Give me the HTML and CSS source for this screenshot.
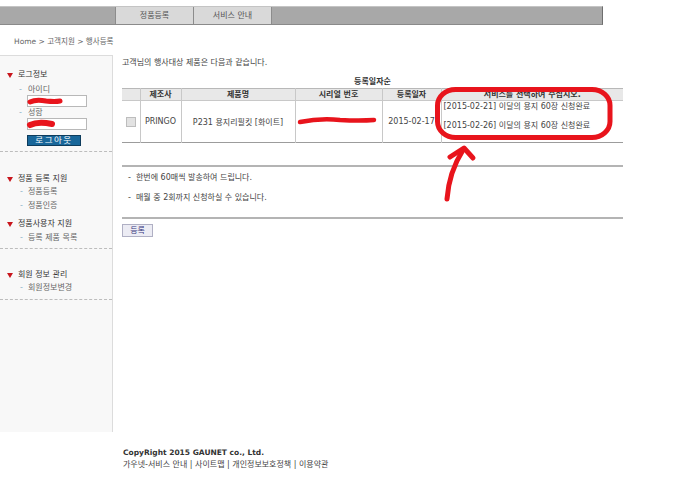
FILE: index.html
```html
<!DOCTYPE html>
<html lang="ko">
<head>
<meta charset="utf-8">
<title>행사등록</title>
<link rel="stylesheet" href="styles.css">
</head>
<body>
<div class="page">
  <div class="topnav">
    <div class="nav-left"></div>
    <a class="tab">정품등록</a>
    <a class="tab">서비스 안내</a>
    <div class="nav-rest"></div>
  </div>
  <div class="crumb">Home &gt; 고객지원 &gt; 행사등록</div>
  <div class="body-row">
    <aside class="side">
      <section class="sec sec-first">
        <div class="sec-title">로그정보</div>
        <div class="item item-sm item-first">아이디</div>
        <div class="field"></div>
        <div class="item item-sm">성함</div>
        <div class="field"></div>
        <div class="logout">로그아웃</div>
      </section>
      <section class="sec sec-2">
        <div class="sec-title">정품 등록 지원</div>
        <div class="item">정품등록</div>
        <div class="item">정품인증</div>
        <div class="sec-title sec-title-2">정품사용자 지원</div>
        <div class="item item-gap">등록 제품 목록</div>
      </section>
      <section class="sec sec-3">
        <div class="sec-title">회원 정보 관리</div>
        <div class="item">회원정보변경</div>
      </section>
    </aside>
    <main class="main">
      <p class="intro">고객님의 행사대상 제품은 다음과 같습니다.</p>
      <div class="caption">등록일자순</div>
      <table class="list">
        <colgroup>
          <col class="c-chk"><col class="c-maker"><col class="c-name"><col class="c-serial"><col class="c-date"><col class="c-state">
        </colgroup>
        <thead>
          <tr><th></th><th>제조사</th><th>제품명</th><th>시리얼 번호</th><th>등록일자</th><th>서비스를 선택하여 주십시오.</th></tr>
        </thead>
        <tbody>
          <tr>
            <td><span class="box"></span></td>
            <td>PRINGO</td>
            <td>P231 용지리필킷 [화이트]</td>
            <td></td>
            <td>2015-02-17</td>
            <td class="state">
              <div>[2015-02-21] 이달의 용지 60장 신청완료</div>
              <div class="state-2">[2015-02-26] 이달의 용지 60장 신청완료</div>
            </td>
          </tr>
        </tbody>
      </table>
      <div class="notes">
        <p>-&nbsp;&nbsp;한번에 60매씩 발송하여 드립니다.</p>
        <p>-&nbsp;&nbsp;매월 중 2회까지 신청하실 수 있습니다.</p>
      </div>
      <button class="btn">등록</button>
    </main>
  </div>
  <footer class="foot">
    <p class="copy">CopyRight 2015 GAUNET co., Ltd.</p>
    <p class="links">가우넷-서비스 안내 | 사이트맵 | 개인정보보호정책 | 이용약관</p>
  </footer>
  <svg class="marks" width="681" height="494" viewBox="0 0 681 494">
    <path d="M30 102 Q36 99 46 101 Q55 102 60 101" stroke="#e8141c" stroke-width="5" fill="none" stroke-linecap="round"/>
    <path d="M30 125 Q38 121 52 124" stroke="#e8141c" stroke-width="6" fill="none" stroke-linecap="round"/>
    <path d="M300 122 Q320 118 340 120 Q360 121 374 120" stroke="#e8141c" stroke-width="4.5" fill="none" stroke-linecap="round"/>
    <rect x="437.5" y="89.5" width="172.5" height="48" rx="18" ry="16" stroke="#e8141c" stroke-width="5" fill="none"/>
    <path d="M447 199 Q449 172 463 150" stroke="#e8141c" stroke-width="5" fill="none" stroke-linecap="round"/>
    <path d="M450 157 L464 148 L473 158" stroke="#e8141c" stroke-width="5" fill="none" stroke-linecap="round" stroke-linejoin="round"/>
  </svg>
</div>
</body>
</html>
```
FILE: styles.css
```css
* { box-sizing: border-box; margin: 0; padding: 0; }
body {
  margin: 0;
  background: #fff;
  font-family: "DejaVu Sans", "Noto Sans CJK KR", sans-serif;
  font-size: 8px;
  color: #444;
}
.page { position: relative; width: 681px; height: 494px; overflow: hidden; }

.topnav {
  display: flex;
  margin-top: 6px;
  width: 603px;
  height: 19px;
  background: #a8a8a8;
  border-top: 1px solid #c4c4c4;
  border-bottom: 1px solid #8a8a8a;
  border-right: 1px solid #6e6e6e;
}
.nav-left { width: 115px; }
.tab {
  width: 78px;
  background: #d9d9d9;
  border-left: 1px solid #8c8c8c;
  color: #555;
  text-align: center;
  line-height: 17px;
  font-size: 8px;
}
.nav-rest { flex: 1; border-left: 1px solid #8c8c8c; }

.crumb {
  margin-top: 11px;
  padding-left: 14px;
  line-height: 12px;
  font-size: 7.5px;
  color: #666;
}

.body-row { display: flex; margin-top: 7px; }

.side {
  width: 113px;
  height: 377px;
  background: #f8f8f8;
  border-top: 1px solid #dcdcdc;
  border-right: 1px solid #dcdcdc;
}
.sec { border-bottom: 1px dashed #bdbdbd; }
.sec-first { padding: 13px 0 5px; }
.sec-2 { padding: 21px 0 3px; }
.sec-3 { padding: 20px 0 4px; }
.sec-title {
  display: flex;
  align-items: center;
  padding-left: 7px;
  line-height: 12px;
  color: #333;
}
.sec-title::before {
  content: "";
  width: 0; height: 0;
  border-left: 3px solid transparent;
  border-right: 3px solid transparent;
  border-top: 5px solid #c8161d;
  margin-right: 5px;
}
.sec-title-2 { margin-top: 5px; }
.item {
  display: flex;
  padding-left: 20px;
  line-height: 14px;
  color: #666;
}
.item::before { content: "-"; width: 8px; color: #8fb3c8; }
.item-sm { line-height: 11px; padding-left: 19px; }
.item-sm::before { width: 9px; }
.item-first { margin-top: 3px; }
.item-gap { margin-top: 1px; }
.field {
  margin-left: 27px;
  width: 60px;
  height: 12px;
  background: #fff;
  border: 1px solid #b8b8b8;
}
.logout {
  margin: 5px 0 0 27px;
  width: 54px;
  height: 11px;
  background: #19679a;
  border: 1px solid #0e3c5c;
  color: #fff;
  text-align: center;
  line-height: 9px;
  font-size: 8.5px;
  letter-spacing: 1.5px;
}

.main { margin-left: 9px; width: 501px; }
.intro { padding-top: 2px; line-height: 12px; color: #444; }
.caption {
  margin-top: 7px;
  line-height: 12px;
  text-align: center;
  font-weight: bold;
  color: #333;
}
.list {
  width: 501px;
  table-layout: fixed;
  border-collapse: collapse;
  border-top: 1px solid #b8b8b8;
  border-bottom: 1px solid #9c9c9c;
}
.c-chk { width: 18px; }
.c-maker { width: 41px; }
.c-name { width: 114px; }
.c-serial { width: 87px; }
.c-date { width: 59px; }
.c-state { width: 182px; }
.list th {
  height: 12px;
  padding: 0;
  background: #e8e8e8;
  border: 1px solid #c8c8c8;
  border-top: none;
  font-weight: bold;
  color: #333;
  line-height: 10px;
  white-space: nowrap;
  overflow: hidden;
}
.list th:first-child, .list td:first-child { border-left: none; }
.list th:last-child, .list td:last-child { border-right: none; }
.list td {
  height: 42px;
  padding: 0;
  border: 1px solid #c8c8c8;
  border-bottom: none;
  text-align: center;
  color: #444;
  white-space: nowrap;
  overflow: hidden;
}
.box {
  display: inline-block;
  vertical-align: middle;
  width: 10px;
  height: 10px;
  background: #e2e2e2;
  border: 1px solid #bdbdbd;
}
.list td.state { text-align: left; vertical-align: top; padding: 0 0 0 2px; }
.state div { line-height: 12px; }
.state .state-2 { margin-top: 7px; }

.notes {
  margin-top: 22px;
  padding: 5px 0 13px 6px;
  border-top: 2px solid #b4b4b4;
  border-bottom: 2px solid #b4b4b4;
}
.notes p { line-height: 12px; color: #444; }
.notes p + p { margin-top: 8px; }
.btn {
  display: block;
  margin-top: 5px;
  width: 31px;
  height: 13px;
  background: #ececf4;
  border: 1px solid #b0b0c4;
  color: #3a3a80;
  font-family: "DejaVu Sans", "Noto Sans CJK KR", sans-serif;
  font-size: 8px;
  line-height: 11px;
}

.foot { margin-top: 15px; padding-left: 123px; }
.foot p { line-height: 12px; }
.copy { font-weight: bold; font-size: 7.5px; color: #333; }
.links { color: #444; line-height: 13px; }

.marks { position: absolute; left: 0; top: 0; pointer-events: none; }
```
